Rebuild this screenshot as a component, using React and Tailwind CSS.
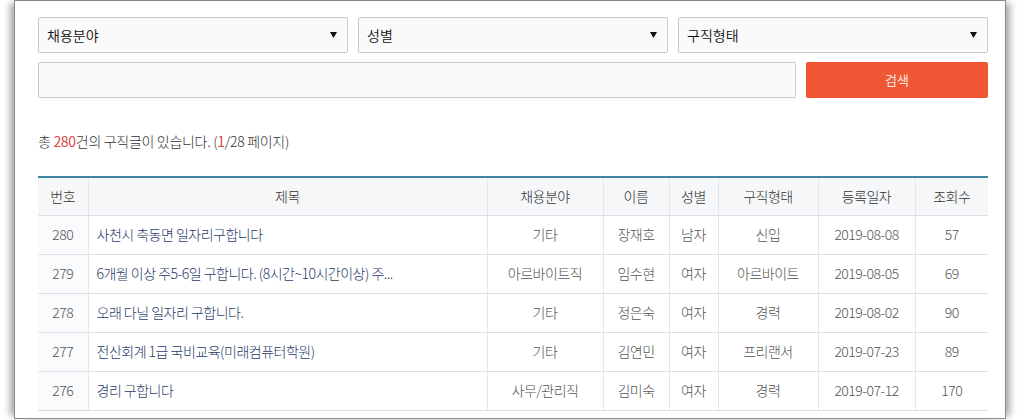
import React from "react";

const rows = [
  ["280", "사천시 축동면 일자리구합니다", "기타", "장재호", "남자", "신입", "2019-08-08", "57"],
  ["279", "6개월 이상 주5-6일 구합니다. (8시간~10시간이상) 주...", "아르바이트직", "임수현", "여자", "아르바이트", "2019-08-05", "69"],
  ["278", "오래 다닐 일자리 구합니다.", "기타", "정은숙", "여자", "경력", "2019-08-02", "90"],
  ["277", "전산회계 1급 국비교육(미래컴퓨터학원)", "기타", "김연민", "여자", "프리랜서", "2019-07-23", "89"],
  ["276", "경리 구합니다", "사무/관리직", "김미숙", "여자", "경력", "2019-07-12", "170"],
];

const font = { fontFamily: '"Noto Sans CJK KR", "Noto Sans", sans-serif' };

function Select({ label }) {
  return (
    <div className="h-[36px] border border-[#c9c9c9] bg-[#fafafa] rounded-[2px] flex items-center justify-between pl-[8px] pr-[10px] text-[14px] text-[#111] font-[350]">
      <span>{label}</span>
      <svg width="7" height="6" viewBox="0 0 7 6">
        <path d="M0 0 L7 0 L3.5 6 Z" fill="#111" />
      </svg>
    </div>
  );
}

export default function App() {
  return (
    <div className="w-[1020px] h-[420px] bg-white overflow-hidden" style={font}>
      <div className="ml-[14px] w-[992px] h-[419px] border border-[#8a8a8a] bg-white pl-[23px] pr-[17px] pt-[16px] shadow-[-7px_0_7px_-3px_rgba(0,0,0,0.35),7px_0_7px_-3px_rgba(0,0,0,0.35)]">
        <div className="grid grid-cols-3 gap-[10px]">
          <Select label="채용분야" />
          <Select label="성별" />
          <Select label="구직형태" />
        </div>
        <div className="mt-[9px] grid grid-cols-[1fr_182px] gap-[10px]">
          <div className="h-[36px] border border-[#c9c9c9] bg-[#fafafa] rounded-[2px]" />
          <div className="h-[36px] rounded-[2px] bg-[#ef5634] flex items-center justify-center text-[13px] text-[#fde9e2]">
            검색
          </div>
        </div>
        <div className="mt-[33px] h-[20px] leading-[20px] text-[14px] text-[#333] tracking-[-0.3px] font-light">
          총 <span className="text-[#e0474c] font-normal">280</span>건의 구직글이 있습니다. (<span className="text-[#e0474c] font-normal">1</span>/28 페이지)
        </div>
        <table className="mt-[25px] w-[950px] table-fixed border-collapse text-[14px] tracking-[-0.5px] font-light border-t-2 border-[#3f84a3]">
          <colgroup>
            <col className="w-[50px]" />
            <col className="w-[399px]" />
            <col className="w-[116px]" />
            <col className="w-[66px]" />
            <col className="w-[49px]" />
            <col className="w-[100px]" />
            <col className="w-[97px]" />
            <col className="w-[73px]" />
          </colgroup>
          <thead>
            <tr className="h-[38px] bg-[#f5f7f9] text-[#333]">
              {["번호", "제목", "채용분야", "이름", "성별", "구직형태", "등록일자", "조회수"].map((h, i) => (
                <th
                  key={h}
                  className={`font-light text-center border-b border-[#dcdfe3] ${i > 0 ? "border-l border-l-[#e3e6ea]" : ""}`}
                >
                  {h}
                </th>
              ))}
            </tr>
          </thead>
          <tbody>
            {rows.map((r) => (
              <tr key={r[0]} className="h-[39px] text-[#555]">
                <td className="text-center bg-[#fafbfc] border-b border-[#dcdfe3]">{r[0]}</td>
                <td className="pl-[8px] text-[#1f3b68] border-b border-l border-[#dcdfe3] border-l-[#e3e6ea] whitespace-nowrap overflow-hidden">{r[1]}</td>
                {r.slice(2).map((c, i) => (
                  <td key={i} className="text-center border-b border-l border-[#dcdfe3] border-l-[#e3e6ea] whitespace-nowrap">
                    {c}
                  </td>
                ))}
              </tr>
            ))}
          </tbody>
        </table>
      </div>
    </div>
  );
}
